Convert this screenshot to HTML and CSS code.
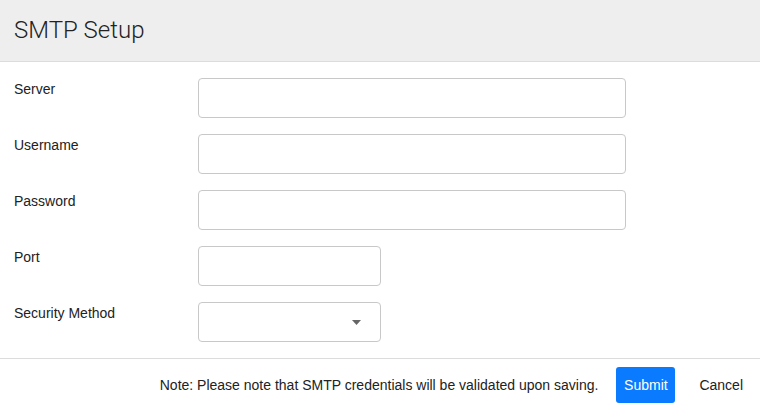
FILE: index.html
```html
<!DOCTYPE html>
<html>
<head>
<meta charset="utf-8">
<link rel="stylesheet" href="styles.css">
</head>
<body>
<div class="modal">
  <div class="header"><h1 class="title">SMTP Setup</h1></div>
  <div class="body">
    <div class="row"><label class="label">Server</label><input class="input wide" type="text"></div>
    <div class="row"><label class="label">Username</label><input class="input wide" type="text"></div>
    <div class="row"><label class="label">Password</label><input class="input wide" type="password"></div>
    <div class="row"><label class="label">Port</label><input class="input narrow" type="text"></div>
    <div class="row"><label class="label">Security Method</label>
      <div class="input narrow select">
        <svg width="9" height="5" viewBox="0 0 9 5"><path d="M0 0H9L4.5 5Z" fill="#666"/></svg>
      </div>
    </div>
  </div>
  <div class="footer">
    <span class="note">Note: Please note that SMTP credentials will be validated upon saving.</span>
    <button class="btn primary">Submit</button>
    <button class="btn link">Cancel</button>
  </div>
</div>
</body>
</html>
```

FILE: styles.css
```css
html, body {
  margin: 0;
  padding: 0;
  background: #fff;
}
body {
  font-family: "Liberation Sans", Arial, sans-serif;
  font-size: 14px;
  color: #222;
}
.modal {
  width: 760px;
}
.header {
  height: 61px;
  background: #eeeeee;
  border-bottom: 1px solid #dcdcdc;
  display: flex;
  align-items: center;
  padding: 0 14px;
}
.title {
  margin: 0;
  font-family: "Roboto", "Liberation Sans", sans-serif;
  font-weight: 300;
  font-size: 24px;
  color: #222;
  line-height: 28px;
  padding-bottom: 1px;
}
.body {
  padding: 16px 14px 16px 14px;
  display: flex;
  flex-direction: column;
  gap: 16px;
  border-bottom: 1px solid #dcdcdc;
}
.row {
  display: flex;
  align-items: flex-start;
}
.label {
  width: 184px;
  line-height: 20px;
  padding-top: 1px;
  color: #222;
}
.input {
  box-sizing: border-box;
  height: 40px;
  border: 1px solid #c8c8c8;
  border-radius: 4px;
  background: #fff;
  margin: 0;
  font: inherit;
  padding: 0 10px;
}
.wide { width: 428px; }
.narrow { width: 183px; }
.select {
  display: flex;
  align-items: center;
  justify-content: flex-end;
  padding-right: 19px;
}
.select svg { display: block; }
.footer {
  display: flex;
  align-items: center;
  justify-content: flex-end;
  padding: 8px 17px 16px 14px;
}
.note {
  color: #222;
  margin-right: 18px;
}
.btn {
  font-family: "Liberation Sans", Arial, sans-serif;
  font-size: 14px;
  border: none;
  margin: 0;
  cursor: pointer;
}
.primary {
  background: #0a7bff;
  color: #fff;
  height: 36px;
  width: 59px;
  padding: 0;
  border-radius: 3px;
}
.link {
  background: none;
  color: #222;
  padding: 0;
  margin-left: 24px;
}
```
